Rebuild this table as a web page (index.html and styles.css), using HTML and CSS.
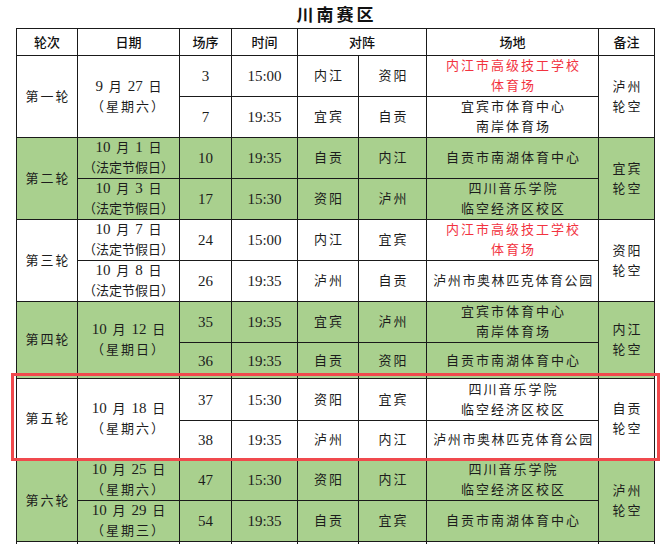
FILE: index.html
```html
<!DOCTYPE html>
<html lang="zh-CN">
<head>
<meta charset="utf-8">
<title>川南赛区</title>
<link rel="stylesheet" href="styles.css">
</head>
<body>
<div class="page">
  <h1 class="title">川南赛区</h1>
  <table class="sched">
    <colgroup>
      <col class="c-round"><col class="c-date"><col class="c-no"><col class="c-time">
      <col class="c-team"><col class="c-team2"><col class="c-venue"><col class="c-note">
    </colgroup>
    <thead>
      <tr class="h-head">
        <th>轮次</th><th>日期</th><th>场序</th><th>时间</th><th colspan="2">对阵</th><th>场地</th><th>备注</th>
      </tr>
    </thead>
    <tbody>
      <tr class="h41">
        <td rowspan="2" class="sp">第一轮</td>
        <td rowspan="2" class="date"><span class="d">9</span> 月 <span class="d">27</span> 日<br><span class="wk">（星期六）</span></td>
        <td class="num">3</td><td class="num">15:00</td>
        <td class="sp">内江</td><td class="sp">资阳</td>
        <td class="sp red">内江市高级技工学校<br>体育场</td>
        <td rowspan="2" class="sp">泸州<br>轮空</td>
      </tr>
      <tr class="h41">
        <td class="num">7</td><td class="num">19:35</td>
        <td class="sp">宜宾</td><td class="sp">自贡</td>
        <td class="sp">宜宾市体育中心<br>南岸体育场</td>
      </tr>

      <tr class="h41 green">
        <td rowspan="2" class="sp">第二轮</td>
        <td class="date"><span class="d">10</span> 月 <span class="d">1</span> 日<br>（法定节假日）</td>
        <td class="num">10</td><td class="num">19:35</td>
        <td class="sp">自贡</td><td class="sp">内江</td>
        <td class="sp">自贡市南湖体育中心</td>
        <td rowspan="2" class="sp">宜宾<br>轮空</td>
      </tr>
      <tr class="h41 green">
        <td class="date"><span class="d">10</span> 月 <span class="d">3</span> 日<br>（法定节假日）</td>
        <td class="num">17</td><td class="num">15:30</td>
        <td class="sp">资阳</td><td class="sp">泸州</td>
        <td class="sp">四川音乐学院<br>临空经济区校区</td>
      </tr>

      <tr class="h41">
        <td rowspan="2" class="sp">第三轮</td>
        <td class="date"><span class="d">10</span> 月 <span class="d">7</span> 日<br>（法定节假日）</td>
        <td class="num">24</td><td class="num">15:00</td>
        <td class="sp">内江</td><td class="sp">宜宾</td>
        <td class="sp red">内江市高级技工学校<br>体育场</td>
        <td rowspan="2" class="sp">资阳<br>轮空</td>
      </tr>
      <tr class="h41">
        <td class="date"><span class="d">10</span> 月 <span class="d">8</span> 日<br>（法定节假日）</td>
        <td class="num">26</td><td class="num">19:35</td>
        <td class="sp">泸州</td><td class="sp">自贡</td>
        <td class="sp tight">泸州市奥林匹克体育公园</td>
      </tr>

      <tr class="h41 green">
        <td rowspan="2" class="sp">第四轮</td>
        <td rowspan="2" class="date"><span class="d">10</span> 月 <span class="d">12</span> 日<br><span class="wk">（星期日）</span></td>
        <td class="num">35</td><td class="num">19:35</td>
        <td class="sp">宜宾</td><td class="sp">泸州</td>
        <td class="sp">宜宾市体育中心<br>南岸体育场</td>
        <td rowspan="2" class="sp">内江<br>轮空</td>
      </tr>
      <tr class="h36 green">
        <td class="num">36</td><td class="num">19:35</td>
        <td class="sp">自贡</td><td class="sp">资阳</td>
        <td class="sp">自贡市南湖体育中心</td>
      </tr>

      <tr class="h42">
        <td rowspan="2" class="sp">第五轮</td>
        <td rowspan="2" class="date"><span class="d">10</span> 月 <span class="d">18</span> 日<br><span class="wk">（星期六）</span></td>
        <td class="num">37</td><td class="num">15:30</td>
        <td class="sp">资阳</td><td class="sp">宜宾</td>
        <td class="sp">四川音乐学院<br>临空经济区校区</td>
        <td rowspan="2" class="sp">自贡<br>轮空</td>
      </tr>
      <tr class="h39">
        <td class="num">38</td><td class="num">19:35</td>
        <td class="sp">泸州</td><td class="sp">内江</td>
        <td class="sp tight">泸州市奥林匹克体育公园</td>
      </tr>

      <tr class="h39 green">
        <td rowspan="2" class="sp">第六轮</td>
        <td class="date"><span class="d">10</span> 月 <span class="d">25</span> 日<br><span class="wk">（星期六）</span></td>
        <td class="num">47</td><td class="num">15:30</td>
        <td class="sp">资阳</td><td class="sp">内江</td>
        <td class="sp">四川音乐学院<br>临空经济区校区</td>
        <td rowspan="2" class="sp">泸州<br>轮空</td>
      </tr>
      <tr class="h41 green">
        <td class="date"><span class="d">10</span> 月 <span class="d">29</span> 日<br><span class="wk">（星期三）</span></td>
        <td class="num">54</td><td class="num">19:35</td>
        <td class="sp">自贡</td><td class="sp">宜宾</td>
        <td class="sp">自贡市南湖体育中心</td>
      </tr>

      <tr class="h41">
        <td></td><td></td><td></td><td></td><td></td><td></td>
        <td class="sp red top">内江市高级技工学校</td>
        <td></td>
      </tr>
    </tbody>
  </table>
  <div class="highlight"></div>
</div>
</body>
</html>
```

FILE: styles.css
```css
html, body {
  margin: 0;
  padding: 0;
  background: #ffffff;
}

.page {
  position: relative;
  width: 670px;
  height: 544px;
  overflow: hidden;
  font-family: "Liberation Serif", "Noto Sans CJK SC", serif;
  color: #1c1c1c;
}

.title {
  margin: 0;
  height: 28px;
  line-height: 28px;
  text-align: center;
  font-family: "Noto Sans CJK SC", sans-serif;
  font-size: 17px;
  font-weight: 700;
  letter-spacing: 3px;
  padding-left: 3px;
  color: #111;
}

.sched {
  margin-left: 16px;
  border-collapse: collapse;
  table-layout: fixed;
  width: 638px;
}

.c-round { width: 61px; }
.c-date { width: 102px; }
.c-no { width: 52px; }
.c-time { width: 66px; }
.c-team { width: 61px; }
.c-team2 { width: 68px; }
.c-venue { width: 172px; }
.c-note { width: 56px; }

.sched th,
.sched td {
  border: 1px solid #1a1a1a;
  padding: 0;
  text-align: center;
  vertical-align: middle;
  line-height: 20px;
  font-size: 13px;
  font-weight: normal;
  overflow: hidden;
  white-space: nowrap;
}

.sched th {
  font-family: "Noto Sans CJK SC", sans-serif;
  font-size: 13px;
  font-weight: 500;
  color: #111;
}

.sched td:nth-child(4),
.sched th:nth-child(4) {
  border-left-color: #6e6e6e;
}

.h-head { height: 27px; }
.h41 { height: 41px; }
.h42 { height: 42px; }
.h39 { height: 39px; }
.h36 { height: 36px; }

.sched .green td {
  background: #a9d08e;
}

.sched .sp {
  letter-spacing: 2px;
  padding-left: 2px;
}

.sched .tight {
  letter-spacing: 1.6px;
}

.sched .date {
  font-size: 13px;
  word-spacing: 2.5px;
}

.sched .date .d {
  font-size: 15px;
  line-height: 1;
}

.sched .date .wk {
  letter-spacing: 2px;
}

.sched .num {
  font-size: 15px;
}

.sched .red {
  color: #f2333f;
}

.sched .top {
  vertical-align: top;
  padding-top: 2px;
}

.highlight {
  position: absolute;
  left: 11px;
  top: 373px;
  width: 643px;
  height: 82px;
  border: 3px solid #f0494d;
}
```
